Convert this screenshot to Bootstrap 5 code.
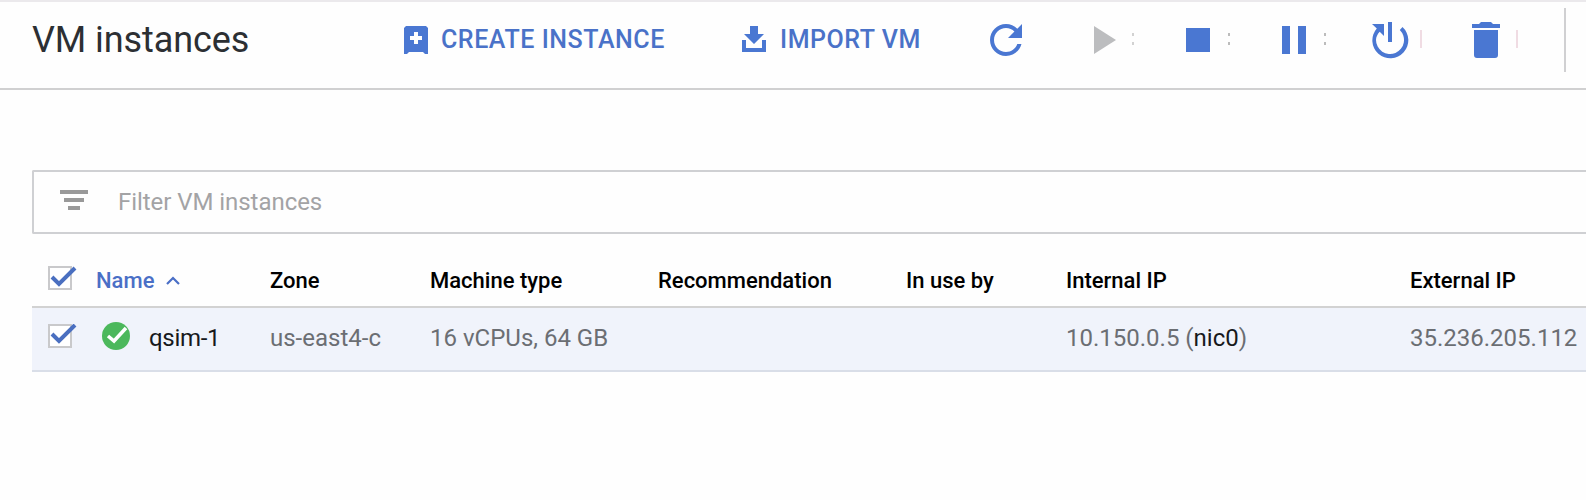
<!DOCTYPE html>
<html lang="en">
<head>
<meta charset="utf-8">
<meta name="viewport" content="width=device-width, initial-scale=1">
<title>VM instances</title>
<link href="https://cdn.jsdelivr.net/npm/bootstrap@5.3.0/dist/css/bootstrap.min.css" rel="stylesheet">
<style>
body { font-family: Roboto, "Liberation Sans", sans-serif; background: #fefefe; height: 500px; overflow: hidden; color: #000; }
svg { display: block; flex: none; }
.toolbar { height: 90px; border-top: 2px solid #ebe9ec; border-bottom: 2px solid #d0d0d1; padding: 0 0 10px 32px; }
.page-title { font-size: 36px; line-height: 46px; letter-spacing: -.08px; width: 372px; color: #2c2f33; margin: 0; font-weight: 400; }
.action { color: #4a72c8; font-size: 25px; line-height: 34px; font-weight: 500; letter-spacing: .55px; }
.action span { margin-bottom: 1px; }
.create-action { width: 338px; gap: 13px; }
.import-action { width: 240px; gap: 14px; }
.import-action svg { margin-bottom: 2px; }
.icon-action { width: 96px; gap: 6px; fill: #4a77d2; }
.dots { width: 2px; height: 12px; border-top: 3px solid #bcbcbc; border-bottom: 3px solid #bcbcbc; margin-bottom: 2px; }
.dots.muted-dots { border-color: #d2d2d2; }
.bar { width: 2px; height: 18px; background: #f0dce3; margin-bottom: 2px; }
.divider { width: 2px; height: 64px; background: #d0d0d2; margin-left: 6px; }
.filter-box { margin: 80px 0 0 32px; height: 64px; border: 2px solid #cfd0d3; border-right: 0; padding-left: 26px; gap: 30px; font-size: 24px; letter-spacing: -.05px; color: #a3a3a5; border-radius: 2px 0 0 2px; }
.filter-box svg { margin-bottom: 4px; }
.vm-table { width: 1554px; margin: 21px 0 0 32px; table-layout: fixed; --bs-table-bg: transparent; }
.vm-table th, .vm-table td { padding: 0; white-space: nowrap; vertical-align: middle; border: 0; }
.vm-table th { height: 52px; font-size: 22px; line-height: 30px; font-weight: 500; color: #000; }
.vm-table tr.head-row { border-bottom: 2px solid #d2d2d2; }
.vm-table tr.vm-row { border-bottom: 2px solid #d9dee8; background: #f0f3fb; }
.vm-table td { height: 64px; padding-bottom: 2px; font-size: 24px; line-height: 34px; color: #6b6e73; }
.vm-table .dark { color: #17191c; }
.vm-table .sorted { color: #4a6fc6; }
.check-icon { margin: 0 0 3px 16px; }
.status { margin: 0 19px 4px 6px; }
.vm-name { letter-spacing: -.3px; }
.sort-gap { gap: 11px; }
</style>
</head>
<body>
<header class="toolbar d-flex align-items-center">
  <h1 class="page-title">VM instances</h1>
  <div class="action create-action d-flex align-items-center">
    <svg width="24" height="28" viewBox="0 0 24 28"><path fill="#4a77d2" fill-rule="evenodd" d="M2 0H22L24 2V28H21L19 26H5L3 28H0V2ZM10 6V10H6V14H10V18H14V14H18V10H14V6Z"/></svg>
    <span>CREATE INSTANCE</span>
  </div>
  <div class="action import-action d-flex align-items-center">
    <svg width="24" height="26" viewBox="0 0 24 26"><path fill="#4a77d2" d="M8 0H16V8H22L12 18L2 8H8ZM0 14H4V22H20V14H24V26H0Z"/></svg>
    <span>IMPORT VM</span>
  </div>
  <div class="icon-action d-flex align-items-center"><svg width="48" height="48" viewBox="0 0 24 24"><path d="M17.65 6.35C16.2 4.9 14.21 4 12 4c-4.42 0-7.99 3.58-7.99 8s3.57 8 7.99 8c3.73 0 6.84-2.55 7.73-6h-2.08c-.82 2.33-3.04 4-5.65 4-3.31 0-6-2.69-6-6s2.69-6 6-6c1.66 0 3.14.69 4.22 1.78L13 11h7V4l-2.35 2.35z"/></svg></div>
  <div class="icon-action d-flex align-items-center"><svg width="48" height="48" viewBox="0 0 24 24"><path fill="#bcbdbf" d="M8 5v14l11-7z"/></svg><span class="dots muted-dots"></span></div>
  <div class="icon-action d-flex align-items-center"><svg width="48" height="48" viewBox="0 0 24 24"><path d="M6 6h12v12H6z"/></svg><span class="dots"></span></div>
  <div class="icon-action d-flex align-items-center"><svg width="48" height="48" viewBox="0 0 24 24"><path d="M6 5h4v14H6zM14 5h4v14h-4z"/></svg><span class="dots"></span></div>
  <div class="icon-action d-flex align-items-center"><svg width="48" height="48" viewBox="0 0 48 48"><path d="M22 6h4v20h-4zM6 8h12v12l-4.300-4.300C11.500 18 10 21 10 24a14 14 0 1 0 23.800-10L36.500 11A18 18 0 1 1 10.800 12.400z"/></svg><span class="bar"></span></div>
  <div class="icon-action d-flex align-items-center"><svg width="48" height="48" viewBox="0 0 48 48"><path d="M12 14h24v25q0 3-3 3H15q-3 0-3-3zM38 8v4H10V8h7l2-2h10l2 2z"/></svg><span class="bar"></span></div>
  <div class="divider"></div>
</header>

<div class="filter-box d-flex align-items-center">
  <svg width="28" height="20" viewBox="0 0 28 20"><path fill="#999" d="M0 0h28v4H0zM4 8h20v4H4zM8 16h12v4H8z"/></svg>
  <span>Filter VM instances</span>
</div>

<table class="table vm-table mb-0">
  <colgroup><col style="width:64px"><col style="width:174px"><col style="width:160px"><col style="width:228px"><col style="width:248px"><col style="width:160px"><col style="width:344px"><col></colgroup>
  <thead>
    <tr class="head-row">
      <th><svg class="check-icon" width="30" height="26" viewBox="0 0 30 26"><path fill="#fff" stroke="#c9c9cb" stroke-width="2" d="M1 1h22v22H1z"/><path fill="none" stroke="#4a6fc0" stroke-width="4" d="M4 11l7 7L27 2"/></svg></th>
      <th class="sorted"><div class="d-flex align-items-center sort-gap"><span>Name</span><svg width="16" height="10" viewBox="0 0 16 10"><path fill="none" stroke="#4a6fc6" stroke-width="2.200" d="M2 8l6-6 6 6"/></svg></div></th>
      <th>Zone</th><th>Machine type</th><th>Recommendation</th><th>In use by</th><th>Internal IP</th><th>External IP</th>
    </tr>
  </thead>
  <tbody>
    <tr class="vm-row">
      <td><svg class="check-icon" width="30" height="26" viewBox="0 0 30 26"><path fill="#fff" stroke="#c9c9cb" stroke-width="2" d="M1 1h22v22H1z"/><path fill="none" stroke="#4a6fc0" stroke-width="4" d="M4 10l7 7L27 1"/></svg></td>
      <td class="dark"><div class="d-flex align-items-center"><svg class="status" width="28" height="28" viewBox="0 0 28 28"><circle cx="14" cy="14" r="14" fill="#4cb85c"/><path fill="none" stroke="#fff" stroke-width="3.500" d="M6 14l6 5L24 6"/></svg><span class="vm-name">qsim-1</span></div></td>
      <td>us-east4-c</td><td>16 vCPUs, 64 GB</td><td></td><td></td><td>10.150.0.5 (<span class="dark">nic0</span>)</td><td>35.236.205.112</td>
    </tr>
  </tbody>
</table>
<script src="https://cdn.jsdelivr.net/npm/bootstrap@5.3.0/dist/js/bootstrap.bundle.min.js"></script>
</body>
</html>
